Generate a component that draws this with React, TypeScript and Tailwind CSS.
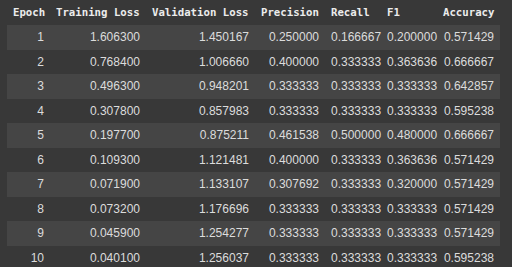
import React from "react";

const headers = ["Epoch", "Training Loss", "Validation Loss", "Precision", "Recall", "F1", "Accuracy"];
const widths = ["w-[43px]", "w-[96px]", "w-[109px]", "w-[70px]", "w-[56px]", "w-[56px]", "w-[63px]"];
const rows = [
  ["1", "1.606300", "1.450167", "0.250000", "0.166667", "0.200000", "0.571429"],
  ["2", "0.768400", "1.006660", "0.400000", "0.333333", "0.363636", "0.666667"],
  ["3", "0.496300", "0.948201", "0.333333", "0.333333", "0.333333", "0.642857"],
  ["4", "0.307800", "0.857983", "0.333333", "0.333333", "0.333333", "0.595238"],
  ["5", "0.197700", "0.875211", "0.461538", "0.500000", "0.480000", "0.666667"],
  ["6", "0.109300", "1.121481", "0.400000", "0.333333", "0.363636", "0.571429"],
  ["7", "0.071900", "1.133107", "0.307692", "0.333333", "0.320000", "0.571429"],
  ["8", "0.073200", "1.176696", "0.333333", "0.333333", "0.333333", "0.571429"],
  ["9", "0.045900", "1.254277", "0.333333", "0.333333", "0.333333", "0.571429"],
  ["10", "0.040100", "1.256037", "0.333333", "0.333333", "0.333333", "0.595238"],
];

export default function App() {
  return (
    <div className="w-[512px] h-[267px] bg-[#383838] pl-[7px] overflow-hidden">
      <table className="table-fixed border-collapse w-[493px]">
        <thead>
          <tr className="h-[25px]">
            {headers.map((h, i) => (
              <th
                key={h}
                className={`${widths[i]} px-[6px] pt-[1px] text-left align-middle whitespace-nowrap font-bold text-[10.7px] text-[#ececec] [font-family:'DejaVu_Sans_Mono',monospace] ${i === 0 || i === 6 ? "text-right" : ""}`}
              >
                {h}
              </th>
            ))}
          </tr>
        </thead>
        <tbody>
          {rows.map((r, ri) => (
            <tr key={ri} className={`h-[24.5px] ${ri % 2 === 0 ? "bg-[#454545]" : "bg-[#383838]"}`}>
              {r.map((c, ci) => (
                <td
                  key={ci}
                  className="p-0 px-[6px] text-right align-middle whitespace-nowrap text-[12px] leading-[14px] text-[#dcdcdc] [font-family:'Liberation_Sans',Arial,sans-serif]"
                >
                  {c}
                </td>
              ))}
            </tr>
          ))}
        </tbody>
      </table>
    </div>
  );
}
